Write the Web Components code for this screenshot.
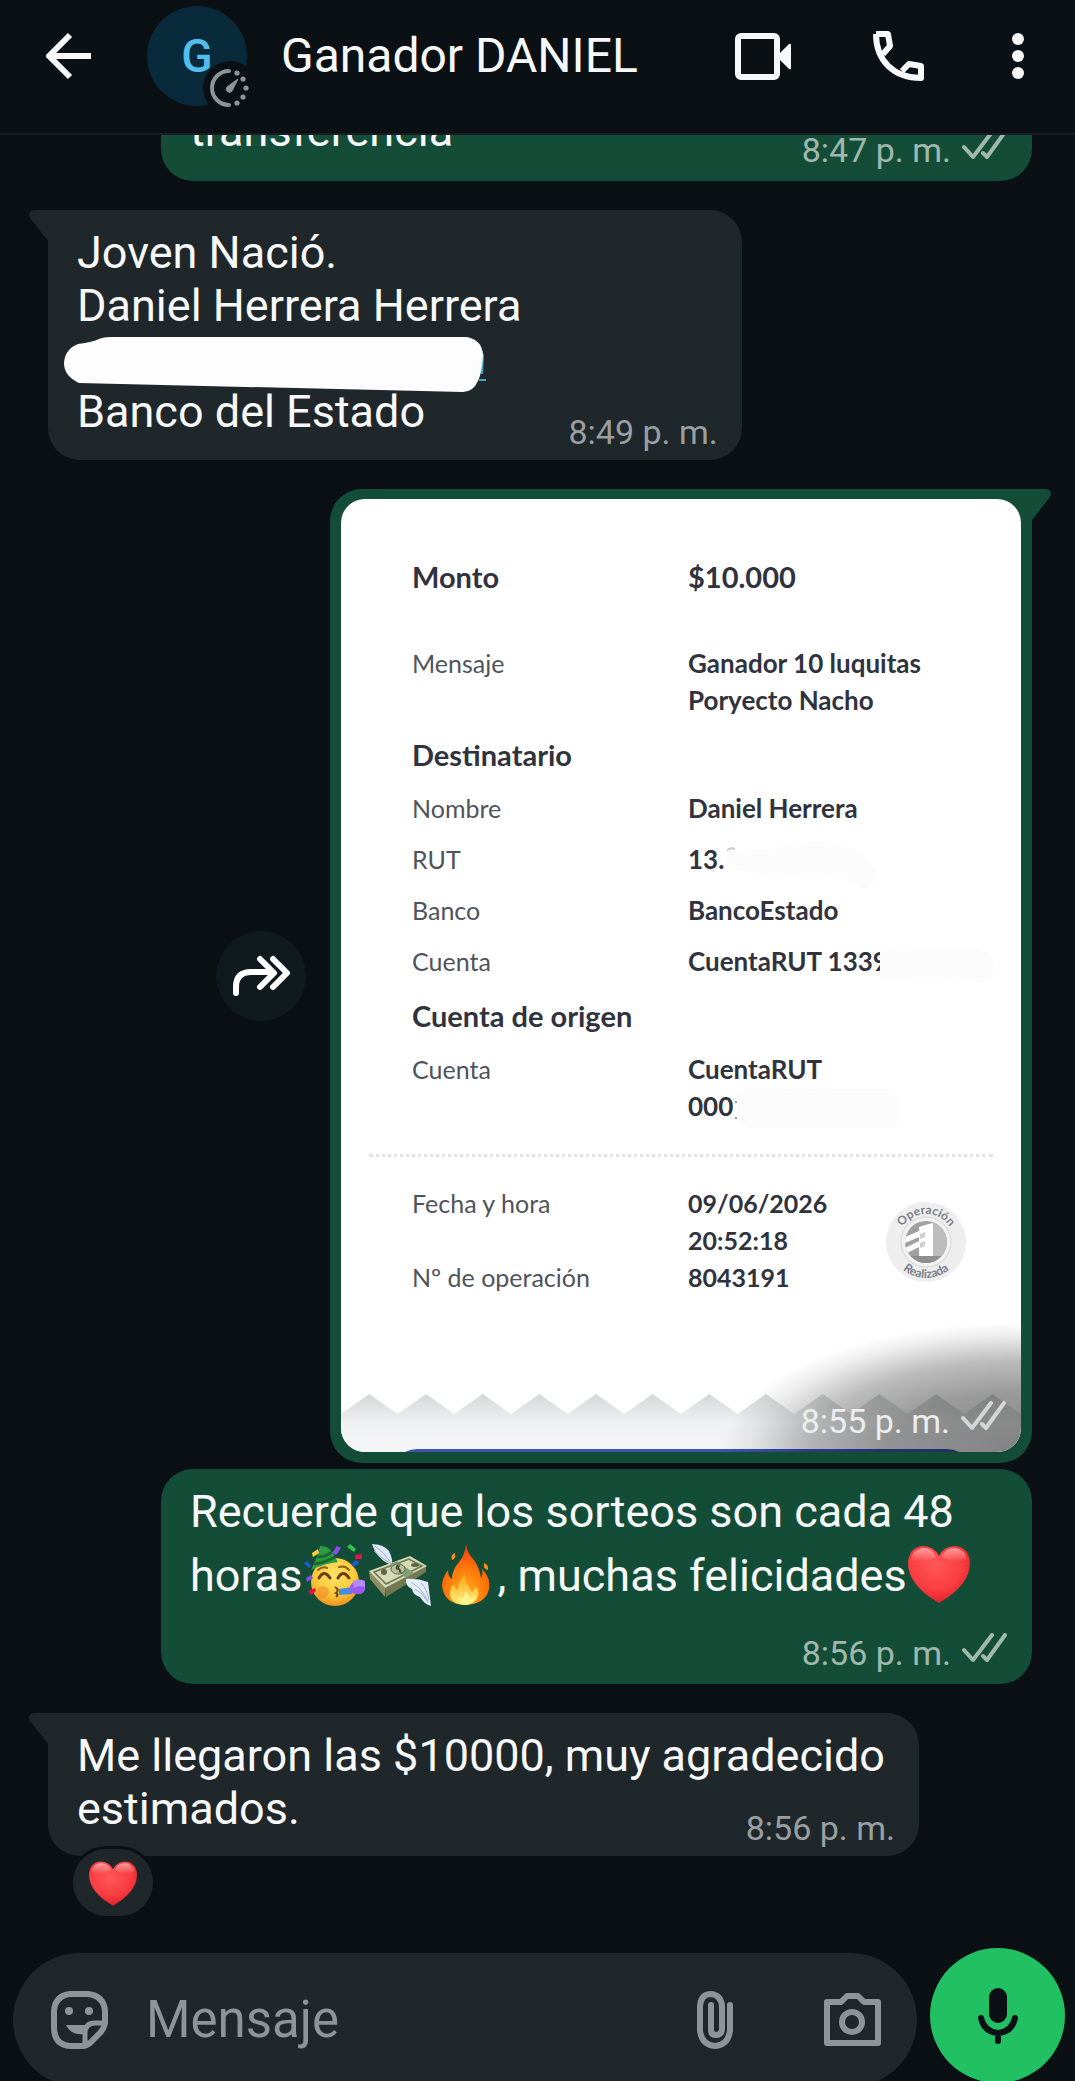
<!DOCTYPE html>
<html lang="es">
<head>
<meta charset="utf-8">
<meta name="viewport" content="width=device-width, initial-scale=1">
<title>Ganador DANIEL</title>
<style>
  body {
    margin: 0;
    overflow: hidden;
    background: #0b1014;
    color: #f7f8fa;
    font-family: Roboto, "Liberation Sans", sans-serif;
  }
</style>
</head>
<body>
<chat-screen>
  <chat-header slot="header" name="Ganador DANIEL" initial="G"></chat-header>

  <chat-message out time="8:47 p. m.">transferencia</chat-message>

  <chat-message tail compact time="8:49 p. m.">Joven Nació.<br>Daniel Herrera Herrera<br><marker-stroke></marker-stroke><br>Banco del Estado</chat-message>

  <photo-message time="8:55 p. m.">
    <transfer-receipt></transfer-receipt>
  </photo-message>

  <chat-message out grouped stacked time="8:56 p. m.">Recuerde que los sorteos son cada 48 horas<emoji-glyph name="party"></emoji-glyph><emoji-glyph name="money"></emoji-glyph><emoji-glyph name="fire"></emoji-glyph>, muchas felicidades<emoji-glyph name="heart"></emoji-glyph></chat-message>

  <chat-message tail time="8:56 p. m.">Me llegaron las $10000, muy agradecido estimados.<emoji-glyph slot="reaction" name="heart" small></emoji-glyph></chat-message>

  <chat-composer slot="footer"></chat-composer>
</chat-screen>

<script>
const CHECKS = /* html */`
  <svg class="checks" width="46" height="30" viewBox="0 0 46 30" fill="none" stroke="currentColor" stroke-width="4" stroke-linecap="round" stroke-linejoin="round" aria-hidden="true">
    <path d="M2 17l9 10L30 2M21 23l4 4L43 2"/>
  </svg>`;

class ChatScreen extends HTMLElement {
  constructor() {
    super();
    this.attachShadow({ mode: "open" });
  }

  static get styles() {
    return /* css */`
      :host {
        display: flex;
        flex-direction: column;
        height: 100vh;
      }

      main {
        flex: 1;
        min-height: 0;
        display: flex;
        flex-direction: column;
        justify-content: flex-end;
        overflow: hidden;
        padding: 0 43px 32px 48px;
      }
    `;
  }

  connectedCallback() {
    this.shadowRoot.innerHTML = /* html */`
    <style>${ChatScreen.styles}</style>
    <slot name="header"></slot>
    <main><slot></slot></main>
    <slot name="footer"></slot>`;
  }
}

class ChatHeader extends HTMLElement {
  constructor() {
    super();
    this.attachShadow({ mode: "open" });
  }

  static get styles() {
    return /* css */`
      :host {
        display: block;
        flex: none;
        border-bottom: 2px solid #171d21;
      }

      header {
        display: flex;
        align-items: center;
        height: 112px;
        padding: 0 50px 21px 40px;
      }

      button {
        display: flex;
        padding: 0;
        border: 0;
        background: none;
        color: inherit;
        cursor: pointer;
      }

      svg {
        display: block;
      }

      .avatar {
        position: relative;
        display: flex;
        align-items: center;
        justify-content: center;
        width: 100px;
        height: 100px;
        margin-left: 49px;
        border-radius: 50%;
        background: #082a3b;
        color: #53bdeb;
        font-size: 46px;
        font-weight: 500;
      }

      .timer {
        position: absolute;
        right: -11px;
        bottom: -10px;
      }

      h1 {
        flex: 1;
        margin: 0 0 0 34px;
        font-size: 48px;
        line-height: 56px;
        font-weight: 400;
        white-space: nowrap;
      }

      .actions {
        display: flex;
        align-items: center;
        gap: 80px;
      }

      .actions button:last-child {
        margin-left: 5px;
      }
    `;
  }

  connectedCallback() {
    this.shadowRoot.innerHTML = /* html */`
    <style>${ChatHeader.styles}</style>
    <header>
      <button aria-label="Atrás">
        <svg width="58" height="58" viewBox="0 0 58 58" fill="none" stroke="currentColor" stroke-width="6" stroke-linejoin="round">
          <path d="M51 29H10M30 8L9 29l21 21"/>
        </svg>
      </button>
      <div class="avatar">
        <span>${this.getAttribute("initial")}</span>
        <svg class="timer" width="56" height="56" viewBox="0 0 56 56">
          <circle cx="28" cy="28" r="27" fill="#0b1014"/>
          <path d="M27 11a17 17 0 0 0 0 34" fill="none" stroke="#8d9598" stroke-width="4" stroke-linecap="round"/>
          <path d="M36 19l-6 12a3 3 0 0 1-5-4z" fill="#8d9598" stroke="#8d9598" stroke-linejoin="round"/>
          <g fill="#8d9598">
            <circle cx="35" cy="13" r="2.6"/><circle cx="41" cy="19" r="2.6"/><circle cx="44" cy="28" r="2.6"/>
            <circle cx="41" cy="37" r="2.6"/><circle cx="35" cy="43" r="2.6"/>
          </g>
        </svg>
      </div>
      <h1>${this.getAttribute("name")}</h1>
      <div class="actions">
        <button aria-label="Videollamada">
          <svg width="58" height="58" viewBox="0 0 58 58">
            <rect x="4" y="9" width="39" height="41" rx="3" fill="none" stroke="currentColor" stroke-width="6"/>
            <path d="M45 27l10-10q2-1 2 1v23q0 2-2 1L45 32z" fill="currentColor"/>
          </svg>
        </button>
        <button aria-label="Llamar">
          <svg width="54" height="54" viewBox="0 0 54 54" fill="none" stroke="currentColor" stroke-width="6" stroke-linejoin="round">
            <path d="M4 5h12l2 12-7 8M4 5c0 27 18 44 45 44V37l-12-2-7 7"/>
          </svg>
        </button>
        <button aria-label="Más opciones">
          <svg width="14" height="50" viewBox="0 0 14 50" fill="currentColor">
            <circle cx="7" cy="8" r="6"/><circle cx="7" cy="25" r="6"/><circle cx="7" cy="42" r="6"/>
          </svg>
        </button>
      </div>
    </header>`;
  }
}

class ChatMessage extends HTMLElement {
  constructor() {
    super();
    this.attachShadow({ mode: "open" });
  }

  static get styles() {
    return /* css */`
      :host {
        display: flex;
        flex-direction: column;
        flex: none;
        align-items: flex-start;
        margin-top: 29px;
      }

      :host([out]) {
        align-items: flex-end;
      }

      :host([grouped]) {
        margin-top: 6px;
      }

      .bubble {
        position: relative;
        display: grid;
        box-sizing: border-box;
        width: min(100%, 871px);
        padding: 16px 24px 8px 29px;
        border-radius: 32px;
        background: #1f272a;
      }

      :host([out]) .bubble {
        padding-bottom: 11px;
        background: #144d37;
      }

      :host([tail]) .bubble {
        border-top-left-radius: 0;
      }

      :host([compact]) .bubble {
        width: auto;
        grid-template-columns: auto auto;
        align-items: end;
        column-gap: 47px;
      }

      .tail {
        position: absolute;
        top: 0;
        left: -19px;
      }

      p {
        margin: 0;
        font-size: 45px;
        line-height: 53px;
      }

      :host([compact]) p {
        margin-bottom: 14px;
      }

      .meta {
        display: flex;
        justify-self: end;
        gap: 11px;
        margin-top: -27px;
        color: #9a9fa1;
        font-size: 34px;
        line-height: 40px;
        white-space: nowrap;
      }

      :host([out]) .meta {
        color: #a1b8ae;
      }

      :host([stacked]) .meta {
        margin-top: 27px;
      }

      .reaction {
        display: flex;
        align-items: center;
        justify-content: center;
        z-index: 1;
        width: 80px;
        height: 67px;
        margin: -10px 0 -3px 22px;
        border: 3px solid #0b1014;
        border-radius: 37px;
        background: #1f272a;
      }
    `;
  }

  connectedCallback() {
    const out = this.hasAttribute("out");
    const reaction = this.querySelector("[slot=reaction]");
    this.shadowRoot.innerHTML = /* html */`
    <style>${ChatMessage.styles}</style>
    <div class="bubble">
      ${this.hasAttribute("tail") ? `<svg class="tail" width="20" height="32" viewBox="0 0 20 32" fill="#1f272a" aria-hidden="true"><path d="M20 0H5Q-2 1 1 8L19 31h1z"/></svg>` : ""}
      <p><slot></slot></p>
      <div class="meta"><time>${this.getAttribute("time")}</time>${out ? CHECKS : ""}</div>
    </div>
    ${reaction ? `<div class="reaction"><slot name="reaction"></slot></div>` : ""}`;
  }
}

// White marker drawn over a line of text
class MarkerStroke extends HTMLElement {
  constructor() {
    super();
    this.attachShadow({ mode: "open" });
  }

  connectedCallback() {
    this.shadowRoot.innerHTML = /* html */`
    <style>
      :host {
        position: relative;
        display: inline-block;
        width: 400px;
        height: 1px;
      }

      svg {
        position: absolute;
        left: -14px;
        top: -37px;
      }
    </style>
    <svg width="424" height="58" viewBox="0 0 424 58" aria-hidden="true">
      <path d="M416 8l4 12-1 18M416 44h7" fill="none" stroke="#3ba5d8" stroke-width="2"/>
      <path d="M15 8Q30 6 36 3q4-2 12-2h356q15 3 16 18-1 18-5 26-5 11-15 11L16 47Q1 40 1 27 2 13 15 8z" fill="#fdfdfd"/>
    </svg>`;
  }
}

class PhotoMessage extends HTMLElement {
  constructor() {
    super();
    this.attachShadow({ mode: "open" });
  }

  static get styles() {
    return /* css */`
      :host {
        display: flex;
        flex: none;
        align-items: center;
        justify-content: flex-end;
        gap: 24px;
        margin-top: 29px;
      }

      .forward {
        display: flex;
        align-items: center;
        justify-content: center;
        width: 90px;
        height: 90px;
        padding: 0;
        border: 0;
        border-radius: 50%;
        background: #0f191e;
        color: #fff;
      }

      .bubble {
        position: relative;
        box-sizing: border-box;
        width: min(100%, 702px);
        padding: 10px 11px 11px;
        border-radius: 32px 0 32px 32px;
        background: #144d37;
      }

      .tail {
        position: absolute;
        top: 0;
        right: -19px;
      }

      .photo {
        position: relative;
        overflow: hidden;
        border-radius: 24px;
        background: #fff;
      }

      .shade {
        position: absolute;
        right: 0;
        bottom: 0;
        width: 300px;
        height: 130px;
        background: radial-gradient(100% 100% at 100% 100%, #0007 0%, #0006 45%, #0004 70%, #0001 90%, #0000 100%);
      }

      .meta {
        position: absolute;
        right: 14px;
        bottom: 11px;
        display: flex;
        gap: 11px;
        color: #eceded;
        font-size: 34px;
        line-height: 40px;
      }

      .checks {
        color: #d4d5d5;
      }
    `;
  }

  connectedCallback() {
    this.shadowRoot.innerHTML = /* html */`
    <style>${PhotoMessage.styles}</style>
    <button class="forward" aria-label="Reenviar">
      <svg width="60" height="46" viewBox="0 0 60 46" fill="none" stroke="currentColor" stroke-width="6" stroke-linecap="round" stroke-linejoin="round">
        <path d="M5 40V34Q5 19 20 19H41M29 6l14 14-14 14M42 6l14 14-14 14"/>
      </svg>
    </button>
    <div class="bubble">
      <svg class="tail" width="20" height="32" viewBox="0 0 20 32" fill="#144d37" aria-hidden="true"><path d="M0 0h15q7 1 4 8L1 31H0z"/></svg>
      <div class="photo">
        <slot></slot>
        <div class="shade"></div>
        <div class="meta"><time>${this.getAttribute("time")}</time>${CHECKS}</div>
      </div>
    </div>`;
  }
}

class TransferReceipt extends HTMLElement {
  constructor() {
    super();
    this.attachShadow({ mode: "open" });
  }

  static get styles() {
    return /* css */`
      :host {
        display: flow-root;
        color: #30333e;
        font-family: Lato, "Open Sans", sans-serif;
        font-size: 25px;
        line-height: 37px;
      }

      table {
        width: 100%;
        border-collapse: collapse;
        table-layout: fixed;
      }

      .details {
        margin-top: 49px;
      }

      th, td {
        padding: 7px 0;
        text-align: left;
        vertical-align: top;
      }

      th {
        width: 276px;
        padding-left: 71px;
        color: #50535c;
        font-weight: 400;
      }

      td {
        font-weight: 700;
      }

      .details td {
        font-size: 26px;
      }

      .details .head th, .details .amount td {
        padding-top: 10px;
        padding-bottom: 10px;
        color: #30333e;
        font-size: 29px;
        font-weight: 700;
      }

      .details .amount th, .details .amount td {
        padding-bottom: 43px;
      }

      .erased {
        position: relative;
      }

      .erased svg {
        position: absolute;
        left: 100%;
        bottom: -14px;
      }

      .erased .card-stroke {
        bottom: -8px;
        margin-left: -8px;
      }

      .erased .account-stroke {
        bottom: -8px;
      }

      hr {
        margin: 22px 28px 28px;
        border: 0;
        border-top: 3px dotted #e2e3e4;
      }

      .footer {
        position: relative;
      }

      .footer th, .footer td {
        padding-top: 0;
        padding-bottom: 0;
      }

      .seal {
        position: absolute;
        right: 54px;
        top: 16px;
      }

      .seal text {
        fill: #7b7e8a;
        font-size: 12px;
        font-weight: 700;
      }

      .edge {
        display: block;
        width: 100%;
        margin-top: 96px;
      }
    `;
  }

  get edge() {
    let d = "M0 22";
    for (let i = 0; i < 12; i++) {
      d += `L${(i + 0.5) * 680 / 12} 2L${(i + 1) * 680 / 12} 22`;
    }
    return d + "V60H0Z";
  }

  connectedCallback() {
    this.shadowRoot.innerHTML = /* html */`
    <style>${TransferReceipt.styles}</style>
    <table class="details">
      <tr class="head amount"><th>Monto</th><td>$10.000</td></tr>
      <tr><th>Mensaje</th><td>Ganador 10 luquitas<br>Poryecto Nacho</td></tr>
      <tr class="head"><th colspan="2">Destinatario</th></tr>
      <tr><th>Nombre</th><td>Daniel Herrera</td></tr>
      <tr><th>RUT</th><td><span class="erased">13.<svg width="154" height="48" viewBox="0 0 154 48" fill="#fcfcfc"><path d="M4 11Q60 8 90 0q60 6 62 34-2 14-14 14-22-14-50-16Q40 36 6 28-2 20 4 11z"/><path d="M3 9q5-3 8-1" fill="none" stroke="#c9cacc" stroke-width="2"/></svg></span></td></tr>
      <tr><th>Banco</th><td>BancoEstado</td></tr>
      <tr><th>Cuenta</th><td><span class="erased">CuentaRUT 1339<svg class="card-stroke" width="114" height="40" viewBox="0 0 114 40" fill="#fcfcfc"><path d="M0 6Q60 2 90 2q24 4 24 18-1 18-16 18-14-5-30-5Q30 34 0 34z"/></svg></span></td></tr>
      <tr class="head"><th colspan="2">Cuenta de origen</th></tr>
      <tr><th>Cuenta</th><td>CuentaRUT<br><span class="erased">000<svg class="account-stroke" width="168" height="42" viewBox="0 0 168 42"><path d="M3 13v2M3 29v2" stroke="#9a9ca2" stroke-width="2"/><rect x="4" y="1" width="163" height="39" rx="14" fill="#fcfcfc"/></svg></span></td></tr>
    </table>
    <hr>
    <div class="footer">
      <table>
        <tr><th>Fecha y hora</th><td>09/06/2026<br>20:52:18</td></tr>
        <tr><th>Nº de operación</th><td>8043191</td></tr>
      </table>
      <svg class="seal" width="82" height="82" viewBox="0 0 82 82">
        <defs>
          <path id="top" d="M13 41a28 28 0 0 1 56 0"/>
          <path id="bottom" d="M5 41a36 36 0 0 0 72 0"/>
          <clipPath id="disc"><circle cx="41" cy="41" r="21"/></clipPath>
        </defs>
        <circle cx="41" cy="41" r="40" fill="#eeeeef"/>
        <circle cx="41" cy="41" r="25" fill="#f2f2f2" stroke="#dedede" stroke-width="1.5"/>
        <g clip-path="url(#disc)">
          <path d="M20 20h42v42H20z" fill="#a1a1a1"/>
          <path d="M48 20h16v35H48z" fill="#bdbdbd"/>
          <path d="M20 55h44v8H20z" fill="#8f8f8f"/>
          <path d="M48 22v33H34v-9l-12 6-4-4 16-8v-4l-14 6v-6l14-6v-4l6-2z" fill="#fff"/>
          <path d="M35 33l5-2v5l-5 2zM35 42l5-2v5l-5 2z" fill="#cfcfcf"/>
        </g>
        <text text-anchor="middle"><textPath href="#top" startOffset="50%">Operación</textPath></text>
        <text text-anchor="middle"><textPath href="#bottom" startOffset="50%">Realizada</textPath></text>
      </svg>
    </div>
    <svg class="edge" viewBox="0 0 680 60" aria-hidden="true">
      <defs>
        <linearGradient id="paper" x1="0" y1="0" x2="0" y2="1">
          <stop offset="0" stop-color="#d6d7d7"/>
          <stop offset="0.5" stop-color="#f0f1f2"/>
          <stop offset="1" stop-color="#f4f5f7"/>
        </linearGradient>
      </defs>
      <path d="${this.edge}" fill="url(#paper)"/>
      <path d="M64 60q6-3 12-3h530q6 0 12 3z" fill="#3b55b0"/>
    </svg>`;
  }
}

const EMOJI = {
  party: /* html */`
    <defs>
      <radialGradient id="face" cx=".5" cy=".35" r=".65"><stop offset="0" stop-color="#ffe36b"/><stop offset=".65" stop-color="#fbc838"/><stop offset="1" stop-color="#ee9220"/></radialGradient>
    </defs>
    <circle cx="31" cy="38" r="24" fill="url(#face)"/>
    <circle cx="19" cy="48" r="6" fill="#f58a2c" opacity=".6"/>
    <path d="M7 26Q14 12 16 2q9 0 12 6l6 10q-12 1-27 8z" fill="#2f9a46"/>
    <path d="M13 13q8 0 15-5M10 20q10-1 21-7" fill="none" stroke="#156a30" stroke-width="3"/>
    <path d="M15 34q5-9 11 0M34 34q5-9 11 0" fill="none" stroke="#6b3f14" stroke-width="3" stroke-linecap="round"/>
    <path d="M14 26q5-4 9-2M35 23q6-2 10 3" fill="none" stroke="#8d5a1a" stroke-width="2" stroke-linecap="round"/>
    <path d="M31 43q5 3 1 6 3 1 0 4" fill="none" stroke="#6b3f14" stroke-width="2"/>
    <path d="M35 45l13-2v7l-13 1z" fill="#3e8ee8"/>
    <path d="M46 42l4-5h11v9q-2 5-8 4l-7-1z" fill="#9a5cf0"/>
    <path d="M49 37q6-3 12 0v6q-7-2-11 1z" fill="#b58af8"/>
    <path d="M28 9l5-7 4 2-5 7zM2 34l5-3 2 3-6 4z" fill="#8b4df0"/>
    <path d="M43 3l3-3 6 5-2 3z" fill="#35c24a"/>
    <path d="M8 9l6-4 1 4-6 4z" fill="#ffcf3a"/>
    <path d="M51 11l7-1v5h-7zM4 47l7-3 1 3-5 4z" fill="#e5134c"/>
    <path d="M0 19l3-2 4 5-2 2zM48 20l4-4 3 3-6 4z" fill="#1f58e8"/>`,
  money: /* html */`
    <path d="M3 0q11 0 17 7 4 8 3 14l-5-2Q7 13 3 0z" fill="#dbe6f3"/>
    <path d="M6 2q9 6 16 17M5 7q8 8 16 12" fill="none" stroke="#a4b4c8" stroke-width="1"/>
    <path d="M0 27l16 17v9L1 35z" fill="#8d8f63"/>
    <path d="M16 44l41-22v6L17 53z" fill="#737852"/>
    <path d="M0 27l41-15 17 10-42 22z" fill="#d6d9b4"/>
    <path d="M5 28l35-13 13 7-36 18z" fill="none" stroke="#6c7654" stroke-width="1.5"/>
    <path d="M21 20l7-3 17 12-8 5z" fill="#7fa078"/>
    <ellipse cx="29" cy="25" rx="7" ry="5" fill="#b9c29b" stroke="#59674a"/>
    <ellipse cx="15" cy="28" rx="3" ry="3" fill="#59674a"/>
    <ellipse cx="46" cy="21" rx="4" ry="2" fill="#59674a"/>
    <path d="M31 22q-5 0-3 3 5 0 2 3M28 21l4 8" fill="none" stroke="#3c4835" stroke-width="1.5"/>
    <path d="M37 35q11-1 22 3l3 24q-7-2-11-9-7-2-8-8-7-3-6-10z" fill="#e4edf7"/>
    <path d="M42 38q12 7 17 20M46 45q8 4 12 12M52 39q6 6 8 17" fill="none" stroke="#a4b4c8" stroke-width="1"/>`,
  fire: /* html */`
    <defs>
      <radialGradient id="flame" cx=".5" cy=".8" r=".8"><stop offset="0" stop-color="#ffb01c"/><stop offset=".5" stop-color="#ff7a0c"/><stop offset="1" stop-color="#ee3512"/></radialGradient>
      <linearGradient id="core" x1="0" y1="0" x2="0" y2="1"><stop offset="0" stop-color="#ffa617"/><stop offset="1" stop-color="#fff07a"/></linearGradient>
    </defs>
    <path d="M32 0q1 9 8 16 6 9 7 18 2-2 1-9 9 9 7 20-3 15-24 16Q10 60 8 42q0-8 6-16 0 7 4 9 0-9 7-17 6-7 7-18z" fill="url(#flame)"/>
    <path d="M31 61Q15 60 16 48q1-6 4-8 1 5 4 6 0-9 7-16-1 8 4 13 2 5 3 5 3-2 3-6 5 5 3 10-2 8-13 9z" fill="url(#core)"/>
    <path d="M32 61q-8-1-8-8l4 2 4-8 4 7 5-2q0 8-9 9z" fill="#fff38c"/>
    <path d="M21 9q-5 2-3 7 4-1 3-7zM50 19q5 2 4 7-5-1-4-7z" fill="#ff8b13"/>`,
  heart: /* html */`
    <defs>
      <radialGradient id="red" cx=".45" cy=".35" r=".7"><stop offset="0" stop-color="#ff5757"/><stop offset=".6" stop-color="#fa3d40"/><stop offset="1" stop-color="#d91e26"/></radialGradient>
      <linearGradient id="shine" x1="0" y1="0" x2="0" y2="1"><stop offset="0" stop-color="#fff" stop-opacity=".5"/><stop offset="1" stop-color="#fff" stop-opacity="0"/></linearGradient>
    </defs>
    <path d="M31 12Q26 2 15 2 1 3 0 19q0 22 31 40 31-18 31-40Q61 3 47 2 36 2 31 12z" fill="url(#red)"/>
    <path d="M15 4q10 0 13 9-13 8-25 3Q5 5 15 4zM47 4q10 1 12 12-12 5-25-3Q37 4 47 4z" fill="url(#shine)"/>`
};

class EmojiGlyph extends HTMLElement {
  constructor() {
    super();
    this.attachShadow({ mode: "open" });
  }

  connectedCallback() {
    this.shadowRoot.innerHTML = /* html */`
    <style>
      :host {
        display: inline-block;
        width: 62px;
        height: 62px;
        margin: 6px 2px 0 1px;
        vertical-align: -15px;
      }

      :host([small]) {
        width: 48px;
        height: 48px;
        margin: 2px 0 0;
      }

      svg {
        display: block;
        width: 100%;
        height: 100%;
      }
    </style>
    <svg viewBox="0 0 62 62" role="img" aria-label="${this.getAttribute("name")}">${EMOJI[this.getAttribute("name")]}</svg>`;
  }
}

class ChatComposer extends HTMLElement {
  constructor() {
    super();
    this.attachShadow({ mode: "open" });
  }

  static get styles() {
    return /* css */`
      :host {
        display: flex;
        flex: none;
        align-items: flex-start;
        gap: 13px;
        height: 133px;
        padding: 0 10px 0 13px;
      }

      .field {
        flex: 1;
        min-width: 0;
        display: flex;
        align-items: center;
        box-sizing: border-box;
        height: 134px;
        margin-top: 5px;
        padding: 0 36px 0 37px;
        border-radius: 67px;
        background: #1f272a;
        color: #8d9598;
      }

      input {
        flex: 1;
        min-width: 0;
        margin: 0 0 0 38px;
        padding: 0;
        border: 0;
        outline: 0;
        background: none;
        color: #f7f8fa;
        font: 51px/60px Roboto, "Liberation Sans", sans-serif;
      }

      input::placeholder {
        color: #8d9598;
        opacity: 1;
      }

      button {
        display: flex;
        padding: 0;
        border: 0;
        background: none;
        color: inherit;
      }

      .camera {
        margin-left: 90px;
      }

      .mic {
        align-items: center;
        justify-content: center;
        width: 135px;
        height: 135px;
        border-radius: 50%;
        background: #21c063;
        color: #0b1014;
      }
    `;
  }

  connectedCallback() {
    this.shadowRoot.innerHTML = /* html */`
    <style>${ChatComposer.styles}</style>
    <div class="field">
      <button aria-label="Stickers">
        <svg width="58" height="60" viewBox="0 0 58 60" fill="none" stroke="currentColor" stroke-width="6" stroke-linejoin="round">
          <path d="M20 4h18q16 2 17 17v12q-1 6-5 10L40 53q-4 3-9 3H20Q5 55 4 39V21Q5 6 20 4z"/>
          <path d="M55 33H45q-10 0-10 10v13" stroke-width="5"/>
          <path d="M16 35h19v9q-14 2-19-9z" fill="currentColor" stroke="none"/>
          <circle cx="19" cy="21" r="4" fill="currentColor" stroke="none"/><circle cx="39" cy="21" r="4" fill="currentColor" stroke="none"/>
        </svg>
      </button>
      <input type="text" placeholder="Mensaje" aria-label="Mensaje">
      <button aria-label="Adjuntar">
        <svg width="36" height="60" viewBox="0 0 36 60" fill="none" stroke="currentColor" stroke-width="6" stroke-linecap="round">
          <path d="M33 15v26q-2 14-15 15Q5 55 3 41V16Q4 4 14 4q10 1 11 12v24q-1 5-6 5t-5-5V15"/>
        </svg>
      </button>
      <button class="camera" aria-label="Cámara">
        <svg width="58" height="60" viewBox="0 0 58 60" fill="none" stroke="currentColor" stroke-width="6" stroke-linejoin="round">
          <path d="M4 12h14l6-6h11l6 6h14v41H4z"/>
          <circle cx="29" cy="32" r="10"/>
        </svg>
      </button>
    </div>
    <button class="mic" aria-label="Grabar mensaje de voz">
      <svg width="42" height="58" viewBox="0 0 42 58" fill="none" stroke="currentColor" stroke-width="6" stroke-linecap="round">
        <rect x="12" y="1" width="18" height="35" rx="9" fill="currentColor" stroke="none"/>
        <path d="M4 31q3 14 17 15 14-1 17-15M21 47v7"/>
      </svg>
    </button>`;
  }
}

customElements.define("chat-screen", ChatScreen);
customElements.define("chat-header", ChatHeader);
customElements.define("chat-message", ChatMessage);
customElements.define("marker-stroke", MarkerStroke);
customElements.define("photo-message", PhotoMessage);
customElements.define("transfer-receipt", TransferReceipt);
customElements.define("emoji-glyph", EmojiGlyph);
customElements.define("chat-composer", ChatComposer);
</script>
</body>
</html>
